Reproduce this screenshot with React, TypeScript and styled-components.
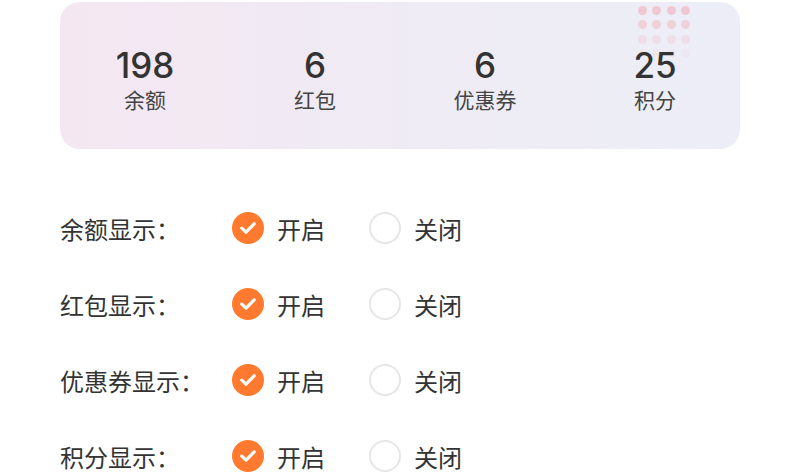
import React, { useState } from 'react';
import styled, { createGlobalStyle } from 'styled-components';

const GlobalStyle = createGlobalStyle`
    body {
        margin: 0;
        background: #ffffff;
        font-family: 'Noto Sans CJK SC', 'Noto Sans', sans-serif;
        color: #333333;
    }
`;

const Page = styled.main`
    padding: 2px 60px 0;
`;

const StatsCard = styled.section`
    position: relative;
    height: 147px;
    border-radius: 20px;
    background: linear-gradient(90deg, #f4e7f2 0%, #efebf4 50%, #eceef7 100%);
    display: flex;
    align-items: center;
    overflow: hidden;
`;

const DotGrid = styled.div`
    position: absolute;
    top: 4px;
    left: 578px;
    display: grid;
    grid-template-columns: repeat(4, 9px);
    gap: 5.4px;
`;

const Dot = styled.span<{ $fade: number }>`
    width: 9px;
    height: 9px;
    border-radius: 50%;
    background: #f0c8d2;
    opacity: ${({ $fade }) => $fade};
`;

const Stat = styled.div`
    position: relative;
    flex: 1;
    display: flex;
    flex-direction: column;
    align-items: center;
    padding-top: 6px;
`;

const StatValue = styled.div`
    font-family: Inter, 'Noto Sans', sans-serif;
    font-size: 35px;
    line-height: 42px;
    font-weight: 500;
    color: #333333;
`;

const StatLabel = styled.div`
    font-size: 21px;
    line-height: 27px;
    color: #444444;
`;

const Settings = styled.div`
    margin-top: 41px;
`;

const Row = styled.div`
    display: flex;
    align-items: center;
    height: 76px;
`;

const RowLabel = styled.div`
    width: 172px;
    font-size: 24px;
    color: #333333;
`;

const Option = styled.button`
    display: flex;
    align-items: center;
    gap: 13px;
    margin-right: 44px;
    padding: 0;
    border: none;
    background: none;
    font-family: inherit;
    font-size: 24px;
    color: #333333;
    cursor: pointer;
`;

const Circle = styled.span<{ $on: boolean }>`
    box-sizing: border-box;
    width: 32px;
    height: 32px;
    border-radius: 50%;
    display: flex;
    align-items: center;
    justify-content: center;
    background: ${({ $on }) => ($on ? '#ff7a2f' : '#ffffff')};
    border: ${({ $on }) => ($on ? 'none' : '2px solid #e6e6e6')};
`;

const STATS = [
    { value: '198', label: '余额' },
    { value: '6', label: '红包' },
    { value: '6', label: '优惠券' },
    { value: '25', label: '积分' },
];

const ROWS = ['余额显示：', '红包显示：', '优惠券显示：', '积分显示：'];

const FADES = [1, 0.8, 0.4, 0.15];

function Radio({ on, label, onClick }: { on: boolean; label: string; onClick: () => void }) {
    return (
        <Option type="button" onClick={onClick}>
            <Circle $on={on}>
                {on && (
                    <svg width="20" height="20" viewBox="0 0 20 20">
                        <path
                            d="M3.8 10.2 L8 14.2 L16.2 5.8"
                            fill="none"
                            stroke="#ffffff"
                            strokeWidth="3.2"
                            strokeLinecap="round"
                            strokeLinejoin="round"
                        />
                    </svg>
                )}
            </Circle>
            {label}
        </Option>
    );
}

export default function App() {
    const [values, setValues] = useState<boolean[]>([true, true, true, true]);

    const setRow = (i: number, v: boolean) =>
        setValues(prev => prev.map((p, idx) => (idx === i ? v : p)));

    return (
        <Page>
            <GlobalStyle />
            <StatsCard>
                <DotGrid>
                    {FADES.flatMap((f, r) =>
                        [0, 1, 2, 3].map(c => <Dot key={`${r}-${c}`} $fade={f} />),
                    )}
                </DotGrid>
                {STATS.map(s => (
                    <Stat key={s.label}>
                        <StatValue>{s.value}</StatValue>
                        <StatLabel>{s.label}</StatLabel>
                    </Stat>
                ))}
            </StatsCard>
            <Settings>
                {ROWS.map((label, i) => (
                    <Row key={label}>
                        <RowLabel>{label}</RowLabel>
                        <Radio on={values[i]} label="开启" onClick={() => setRow(i, true)} />
                        <Radio on={!values[i]} label="关闭" onClick={() => setRow(i, false)} />
                    </Row>
                ))}
            </Settings>
        </Page>
    );
}
